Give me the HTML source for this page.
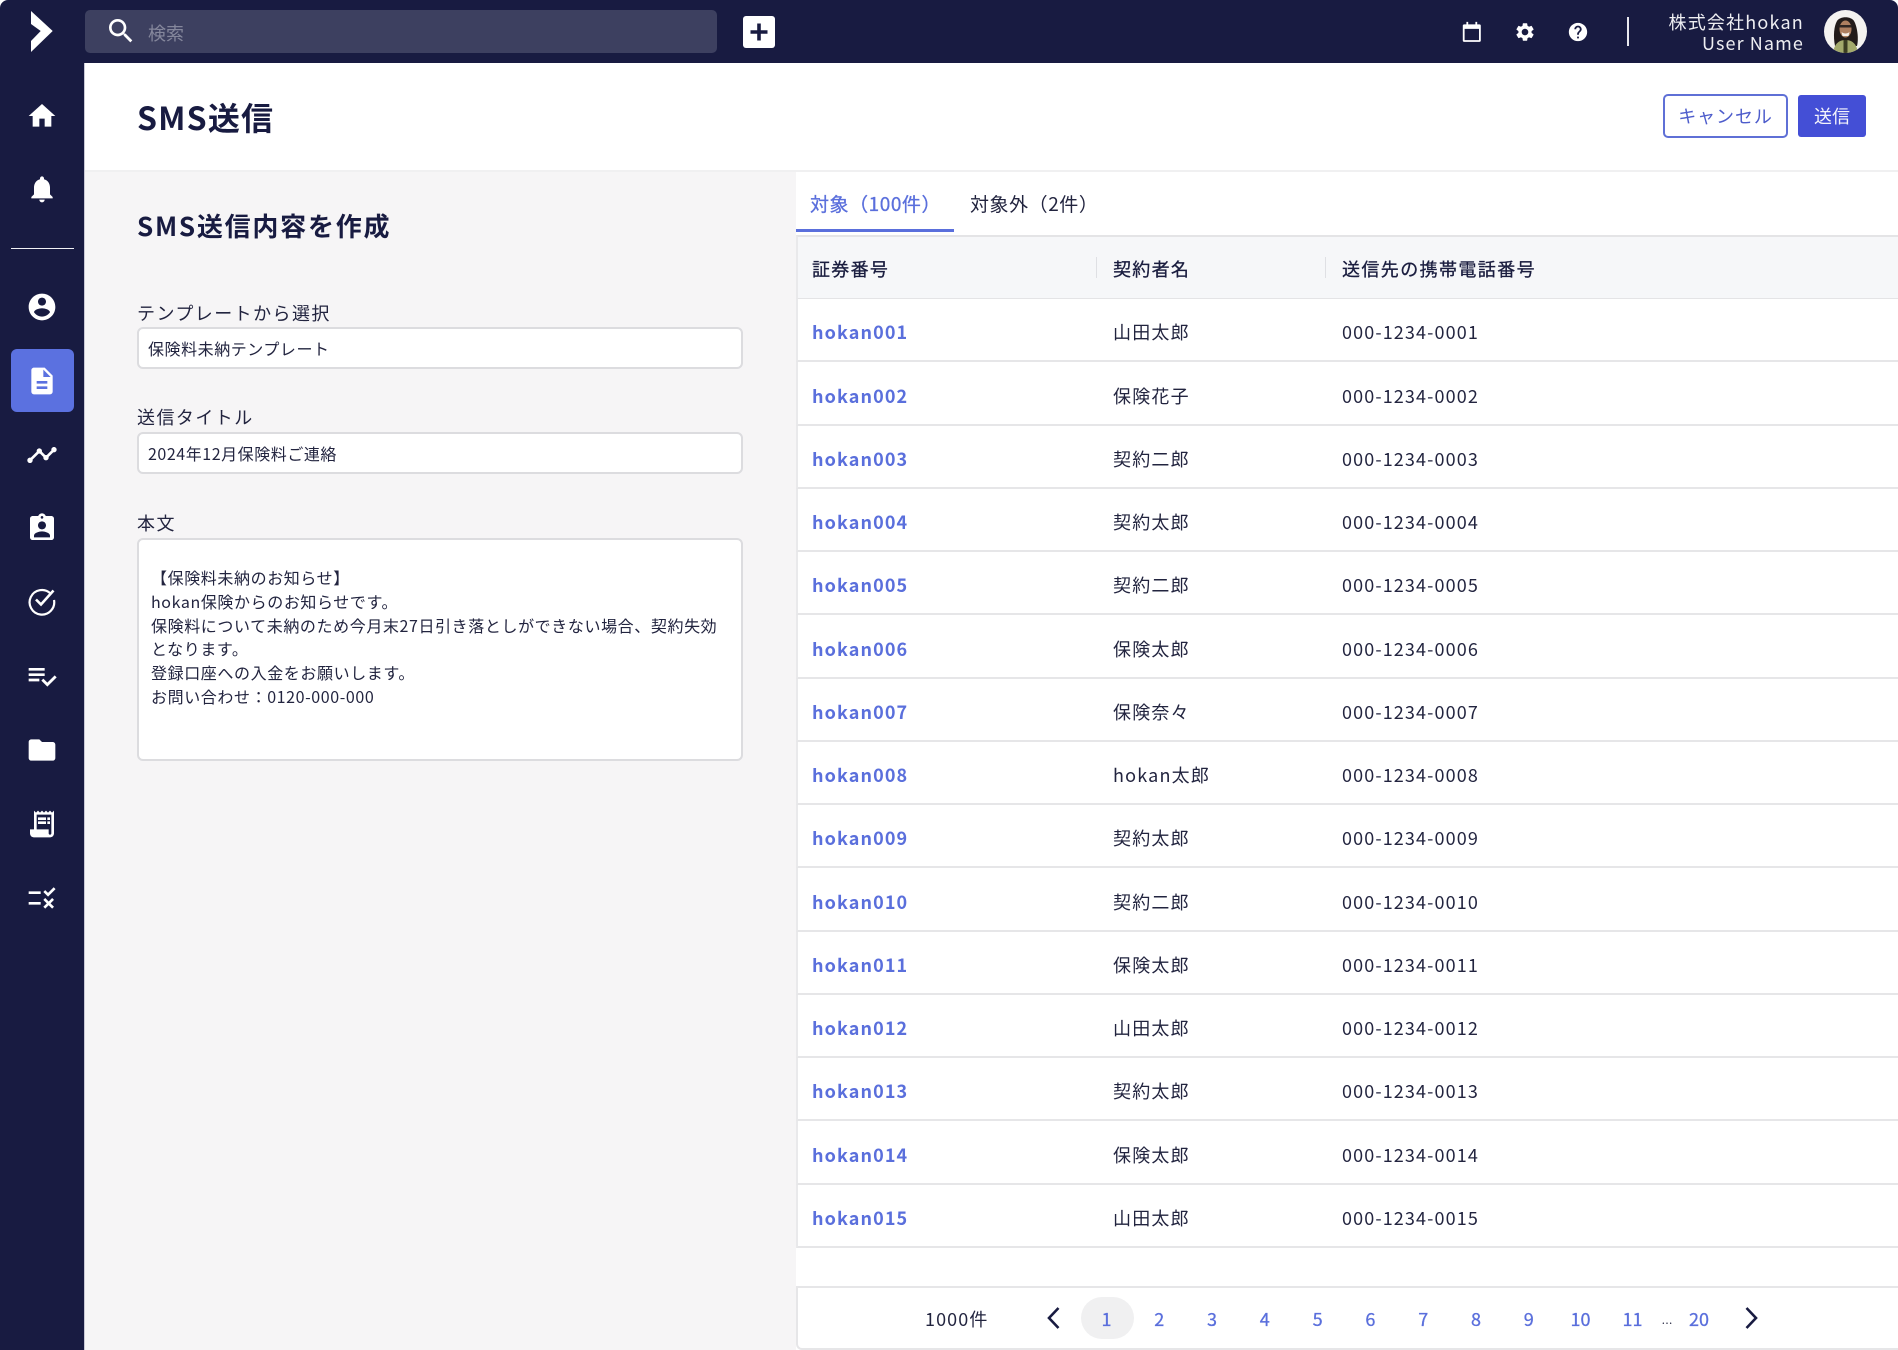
<!DOCTYPE html>
<html lang="ja"><head><meta charset="utf-8"><title>SMS送信</title>
<style>
*{box-sizing:border-box;margin:0;padding:0}
html,body{width:1898px;height:1350px;overflow:hidden;background:#fff}
body{font-family:"Noto Sans CJK JP","Liberation Sans",sans-serif;color:#1a1d3f;position:relative}
.a{position:absolute}
.t{position:absolute;white-space:nowrap;line-height:24px;height:24px}
.m{-webkit-text-stroke:.3px currentColor}
svg{position:absolute;fill:#fff}
.row{position:absolute;left:796px;width:1102px;height:63.25px;border-bottom:2px solid #e6e6e8;border-left:2px solid #e9e9eb;background:#fff}
.row span{position:absolute;top:21.3px;line-height:24px;font-size:18px;letter-spacing:1.1px;white-space:nowrap;color:#22243f}
.row .c1{left:14px;font-weight:700;color:#5a6fdc;letter-spacing:1.1px}
.row .c2{left:315px;letter-spacing:1.2px}
.row .c3{left:544px;letter-spacing:1.12px}
.lb{font-size:18px;letter-spacing:1.44px;color:#22243f;left:137px}
.inp{position:absolute;left:137px;width:606px;background:#fff;border:2px solid #dcdcdf;border-radius:6px}
.in{font-size:16px;letter-spacing:.55px;left:148px;color:#22243f}
.pg{position:absolute;top:1307px;line-height:24px;font-size:18px;color:#5a6fdc;width:40px;text-align:center;-webkit-text-stroke:.3px currentColor}
</style></head><body>
<div class="a" style="left:0;top:0;width:1898px;height:63px;background:#181b41;border-radius:8px 8px 0 0"></div>
<div class="a" style="left:0;top:40px;width:84px;height:1310px;background:#181b41"></div>
<div class="a" style="left:84px;top:63px;width:1px;height:1287px;background:#c9c9d6"></div>
<div class="a" style="left:85px;top:63px;width:1813px;height:109px;background:#fff;border-bottom:2px solid #f0f0f1"></div>
<div class="a" style="left:85px;top:172px;width:711px;height:1178px;background:#f6f5f6"></div>
<div class="a" style="left:796px;top:172px;width:1102px;height:1178px;background:#fff"></div>

<svg style="left:30px;top:11px" width="24" height="42" viewBox="0 0 24 42"><path d="M1 0L22.700 20 1 41V30L10.700 20 1 13z"/></svg>
<div class="a" style="left:85px;top:10px;width:632px;height:43px;background:#3d4060;border-radius:5px"></div>
<svg style="left:105px;top:15px" width="32" height="32" viewBox="0 0 24 24"><path d="M15.500 14h-.79l-.28-.27C15.410 12.590 16 11.110 16 9.500 16 5.910 13.090 3 9.500 3S3 5.910 3 9.500 5.910 16 9.500 16c1.610 0 3.090-.59 4.230-1.570l.27.28v.79l5 4.990L20.490 19l-4.990-5zm-6 0C7.010 14 5 11.990 5 9.500S7.010 5 9.500 5 14 7.010 14 9.500 11.990 14 9.500 14z"/></svg>
<div class="t" style="left:148px;top:20.500px;font-size:18px;color:#85879c">検索</div>
<div class="a" style="left:743px;top:16px;width:32px;height:32px;background:#fff;border-radius:3px"></div>
<svg style="left:743px;top:16px;fill:#181b41" width="32" height="32" viewBox="0 0 32 32"><path d="M14.200 7.500h3.600v6.700h6.700v3.600h-6.700v6.700h-3.600v-6.700H7.500v-3.600h6.700z"/></svg>

<svg style="left:1461.200px;top:21.200px" width="21.600" height="21.700" viewBox="0 0 24 26" preserveAspectRatio="none"><path d="M6 1h2v3h8V1h2v3h2.500c1 0 1.500.7 1.500 1.500V23.500c0 .8-.6 1.500-1.500 1.500h-17C2.600 25 2 24.300 2 23.500V5.500C2 4.700 2.500 4 3.500 4H6zM4 9.500V23h16V9.500z"/></svg>
<svg style="left:1514px;top:21px" width="22" height="22" viewBox="0 0 24 24"><path d="M19.140 12.940c.04-.3.06-.61.06-.94 0-.32-.02-.64-.07-.94l2.030-1.580c.18-.14.23-.41.12-.61l-1.920-3.320c-.12-.22-.37-.29-.59-.22l-2.390.96c-.5-.38-1.030-.7-1.620-.94l-.36-2.540c-.04-.24-.24-.41-.48-.41h-3.840c-.24 0-.43.17-.47.41l-.36 2.540c-.59.24-1.130.57-1.620.94l-2.390-.96c-.22-.08-.47 0-.59.22L2.740 8.870c-.12.21-.08.47.12.61l2.030 1.580c-.05.3-.09.63-.09.94s.02.64.07.94l-2.030 1.580c-.18.14-.23.41-.12.61l1.920 3.320c.12.22.37.29.59.22l2.390-.96c.5.38 1.030.7 1.620.94l.36 2.540c.05.24.24.41.48.41h3.840c.24 0 .44-.17.47-.41l.36-2.540c.59-.24 1.130-.56 1.620-.94l2.390.96c.22.08.47 0 .59-.22l1.920-3.320c.12-.22.07-.47-.12-.61l-2.010-1.580zM12 15.600c-1.980 0-3.600-1.620-3.600-3.600s1.620-3.600 3.600-3.600 3.600 1.620 3.600 3.600-1.620 3.600-3.600 3.600z"/></svg>
<svg style="left:1566.500px;top:21px" width="22" height="22" viewBox="0 0 24 24"><path d="M12 2C6.480 2 2 6.480 2 12s4.480 10 10 10 10-4.480 10-10S17.520 2 12 2zm1 17h-2v-2h2v2zm2.070-7.750l-.9.92C13.450 12.900 13 13.500 13 15h-2v-.5c0-1.100.45-2.100 1.170-2.830l1.240-1.260c.37-.36.59-.86.59-1.410 0-1.100-.9-2-2-2s-2 .9-2 2H8c0-2.210 1.790-4 4-4s4 1.790 4 4c0 .88-.36 1.680-.93 2.250z"/></svg>
<div class="a" style="left:1627px;top:17px;width:2px;height:29px;background:#e8e8ee"></div>
<div class="t" style="right:94px;top:10px;font-size:18px;letter-spacing:1.200px;color:#eeeef2">株式会社hokan</div>
<div class="t" style="right:94px;top:31px;font-size:18px;letter-spacing:1.100px;color:#eeeef2">User Name</div>
<svg style="left:1824px;top:10px;fill:none" width="43" height="43" viewBox="0 0 43 43"><defs><clipPath id="c"><circle cx="21.500" cy="21.500" r="21.500"/></clipPath></defs><g clip-path="url(#c)"><rect width="43" height="43" fill="#f4f3f0"/><path d="M11 36C9 26 10 16 13 11 16 6 27 6 30 11 33 16 35 28 33 36z" fill="#221c1a"/><path d="M9 43c1-8 5-13 12.500-13S33 35 34 43z" fill="#a3aa6c"/><ellipse cx="21.500" cy="19" rx="6" ry="8.500" fill="#ad7f60"/><path d="M17.500 22c2 2 6 2 8 0l-1 4h-6z" fill="#f5f0ea"/><path d="M15.500 15h12v2.500h-12z" fill="#2f2622"/><path d="M19.500 30h4v13h-4z" fill="#3b3d22"/></g></svg>

<!-- sidebar icons -->
<svg style="left:26px;top:100px" width="32" height="32" viewBox="0 0 24 24"><path d="M10 20v-6h4v6h5v-8h3L12 3 2 12h3v8z"/></svg>
<svg style="left:26px;top:173px" width="32" height="32" viewBox="0 0 24 24"><path d="M12 22c1.100 0 2-.9 2-2h-4c0 1.100.89 2 2 2zm6-6v-5c0-3.070-1.640-5.640-4.500-6.320V4c0-.83-.67-1.500-1.500-1.500s-1.500.67-1.500 1.500v.68C7.630 5.360 6 7.920 6 11v5l-2 2v1h16v-1l-2-2z"/></svg>
<div class="a" style="left:11px;top:248px;width:63px;height:1px;background:#f1f1f5"></div>
<svg style="left:26px;top:291px" width="32" height="32" viewBox="0 0 24 24"><path d="M12 2C6.480 2 2 6.480 2 12s4.480 10 10 10 10-4.480 10-10S17.520 2 12 2zm0 3c1.660 0 3 1.340 3 3s-1.340 3-3 3-3-1.340-3-3 1.340-3 3-3zm0 14.200c-2.500 0-4.710-1.280-6-3.220.03-1.990 4-3.080 6-3.080 1.990 0 5.970 1.090 6 3.080-1.290 1.940-3.500 3.220-6 3.220z"/></svg>
<div class="a" style="left:11px;top:349px;width:63px;height:63px;background:#5b71e0;border-radius:6px"></div>
<svg style="left:26px;top:365px" width="32" height="32" viewBox="0 0 24 24"><path d="M14 2H6c-1.100 0-1.990.9-1.990 2L4 20c0 1.100.89 2 1.990 2H18c1.100 0 2-.9 2-2V8l-6-6zm2 16H8v-2h8v2zm0-4H8v-2h8v2zm-3-5V3.500L18.500 9H13z"/></svg>
<svg style="left:26px;top:439px" width="32" height="32" viewBox="0 0 24 24"><path d="M23 8c0 1.100-.9 2-2 2-.18 0-.35-.02-.51-.07l-3.560 3.550c.05.16.07.34.07.52 0 1.100-.9 2-2 2s-2-.9-2-2c0-.18.02-.36.07-.52l-2.550-2.550c-.16.05-.34.07-.52.07s-.36-.02-.52-.07l-4.550 4.560c.05.16.07.33.07.51 0 1.100-.9 2-2 2s-2-.9-2-2 .9-2 2-2c.18 0 .35.02.51.07l4.560-4.550C8.020 9.360 8 9.180 8 9c0-1.100.9-2 2-2s2 .9 2 2c0 .18-.02.36-.07.52l2.550 2.550c.16-.05.34-.07.52-.07s.36.02.52.07l3.550-3.560C19.020 8.350 19 8.180 19 8c0-1.100.9-2 2-2s2 .9 2 2z"/></svg>
<svg style="left:26px;top:512px" width="32" height="32" viewBox="0 0 24 24"><path d="M19 3h-4.180C14.400 1.840 13.300 1 12 1c-1.300 0-2.400.84-2.820 2H5c-1.100 0-2 .9-2 2v14c0 1.100.9 2 2 2h14c1.100 0 2-.9 2-2V5c0-1.100-.9-2-2-2zm-7 0c.55 0 1 .45 1 1s-.45 1-1 1-1-.45-1-1 .45-1 1-1zm0 4c1.660 0 3 1.340 3 3s-1.340 3-3 3-3-1.340-3-3 1.340-3 3-3zm6 12H6v-1.400c0-2 4-3.100 6-3.100s6 1.100 6 3.100V19z"/></svg>
<svg style="left:26px;top:584px;fill:none;stroke:#fff" width="32" height="32" viewBox="0 0 32 32"><path d="M24.500 9.500A12.300 12.300 0 1 0 28 16" stroke-width="2.200"/><path d="M10 15.500l5 5L27.500 6.500" stroke-width="2.600"/></svg>
<svg style="left:26px;top:660px" width="32" height="32" viewBox="0 0 24 24"><path d="M14 10H2v2h12v-2zm0-4H2v2h12V6zM2 16h8v-2H2v2zm19.500-4.500L23 13l-6.990 7-4.510-4.500L13 14l3.010 3 5.490-5.500z"/></svg>
<svg style="left:26px;top:734px" width="32" height="32" viewBox="0 0 24 24"><path d="M10 4H4c-1.100 0-1.990.9-1.990 2L2 18c0 1.100.9 2 2 2h16c1.100 0 2-.9 2-2V8c0-1.100-.9-2-2-2h-8l-2-2z"/></svg>
<svg style="left:26px;top:808px" width="32" height="32" viewBox="0 0 24 24"><path d="M19.500 3.500L18 2l-1.500 1.500L15 2l-1.500 1.500L12 2l-1.500 1.500L9 2 7.500 3.500 6 2v14H3v3c0 1.660 1.340 3 3 3h12c1.660 0 3-1.340 3-3V2l-1.500 1.500zM19 19c0 .55-.45 1-1 1s-1-.45-1-1v-3H8V5h11v14z"/><path d="M9 7h6v2H9zM16 7h2v2h-2zM9 10h6v2H9zM16 10h2v2h-2z"/></svg>
<svg style="left:26px;top:882px" width="32" height="32" viewBox="0 0 24 24"><path d="M16.540 11L13 7.460l1.410-1.410 2.120 2.120 4.240-4.240 1.410 1.410L16.540 11zM11 7H2v2h9V7zm10 6.410L19.590 12 17 14.590 14.410 12 13 13.410 15.590 16 13 18.590 14.410 20 17 17.410 19.590 20 21 18.590 18.410 16 21 13.410zM11 15H2v2h9v-2z"/></svg>

<!-- header -->
<div class="t" style="left:137px;top:96.500px;height:40px;line-height:40px;font-size:32px;font-weight:700;letter-spacing:1.200px;color:#181b41">SMS送信</div>
<div class="a" style="left:1663px;top:94px;width:125px;height:44px;border:2px solid #5f70d6;border-radius:5px;background:#fff;color:#4d5ccb;font-size:18px;line-height:40px;text-align:center;letter-spacing:.9px">キャンセル</div>
<div class="a" style="left:1798px;top:95px;width:68px;height:42px;background:#444fd6;border-radius:3px;color:#f4f4fb;font-size:18px;line-height:42px;text-align:center">送信</div>

<!-- form -->
<div class="t" style="left:137px;top:210px;height:32px;line-height:32px;font-size:26px;font-weight:700;letter-spacing:1.760px;color:#181b41">SMS送信内容を作成</div>
<div class="t lb" style="top:301px">テンプレートから選択</div>
<div class="inp" style="top:327px;height:42px"></div>
<div class="t in" style="top:336px">保険料未納テンプレート</div>
<div class="t lb" style="top:405px">送信タイトル</div>
<div class="inp" style="top:432px;height:42px"></div>
<div class="t in" style="top:441px">2024年12月保険料ご連絡</div>
<div class="t lb" style="top:511px">本文</div>
<div class="inp" style="top:538px;height:223px"></div>
<div class="a" style="left:151px;top:566px;font-size:16px;line-height:23.800px;letter-spacing:.6px;white-space:nowrap;color:#22243f">【保険料未納のお知らせ】<br>hokan保険からのお知らせです。<br>保険料について未納のため今月末27日引き落としができない場合、契約失効<br>となります。<br>登録口座への入金をお願いします。<br>お問い合わせ：0120-000-000</div>

<!-- tabs -->
<div class="t m" style="left:810px;top:192px;font-size:19px;letter-spacing:.55px;color:#5a6fdc">対象（100件）</div>
<div class="t" style="left:970px;top:192px;font-size:19px;letter-spacing:.55px;color:#22243f">対象外（2件）</div>
<div class="a" style="left:796px;top:229px;width:158px;height:3px;background:#5a6fdc"></div>
<div class="a" style="left:796px;top:235px;width:1102px;height:65px;background:#f6f7f9;border-top:2px solid #e4e4e6;border-bottom:2px solid #e4e4e6;border-left:2px solid #e9e9eb"></div>
<div class="t m" style="left:812px;top:257px;font-size:18px;letter-spacing:1.300px">証券番号</div>
<div class="a" style="left:1096px;top:257px;width:1px;height:21px;background:#dfe0e4"></div>
<div class="t m" style="left:1113px;top:257px;font-size:18px;letter-spacing:1.300px">契約者名</div>
<div class="a" style="left:1325px;top:257px;width:1px;height:21px;background:#dfe0e4"></div>
<div class="t m" style="left:1342px;top:257px;font-size:18px;letter-spacing:1.400px">送信先の携帯電話番号</div>

<!-- rows -->
<div class="row" style="top:299px"><span class="c1">hokan001</span><span class="c2">山田太郎</span><span class="c3">000-1234-0001</span></div>
<div class="row" style="top:362.250px"><span class="c1">hokan002</span><span class="c2">保険花子</span><span class="c3">000-1234-0002</span></div>
<div class="row" style="top:425.500px"><span class="c1">hokan003</span><span class="c2">契約二郎</span><span class="c3">000-1234-0003</span></div>
<div class="row" style="top:488.750px"><span class="c1">hokan004</span><span class="c2">契約太郎</span><span class="c3">000-1234-0004</span></div>
<div class="row" style="top:552px"><span class="c1">hokan005</span><span class="c2">契約二郎</span><span class="c3">000-1234-0005</span></div>
<div class="row" style="top:615.250px"><span class="c1">hokan006</span><span class="c2">保険太郎</span><span class="c3">000-1234-0006</span></div>
<div class="row" style="top:678.500px"><span class="c1">hokan007</span><span class="c2">保険奈々</span><span class="c3">000-1234-0007</span></div>
<div class="row" style="top:741.750px"><span class="c1">hokan008</span><span class="c2">hokan太郎</span><span class="c3">000-1234-0008</span></div>
<div class="row" style="top:805px"><span class="c1">hokan009</span><span class="c2">契約太郎</span><span class="c3">000-1234-0009</span></div>
<div class="row" style="top:868.250px"><span class="c1">hokan010</span><span class="c2">契約二郎</span><span class="c3">000-1234-0010</span></div>
<div class="row" style="top:931.500px"><span class="c1">hokan011</span><span class="c2">保険太郎</span><span class="c3">000-1234-0011</span></div>
<div class="row" style="top:994.750px"><span class="c1">hokan012</span><span class="c2">山田太郎</span><span class="c3">000-1234-0012</span></div>
<div class="row" style="top:1058px"><span class="c1">hokan013</span><span class="c2">契約太郎</span><span class="c3">000-1234-0013</span></div>
<div class="row" style="top:1121.250px"><span class="c1">hokan014</span><span class="c2">保険太郎</span><span class="c3">000-1234-0014</span></div>
<div class="row" style="top:1184.500px"><span class="c1">hokan015</span><span class="c2">山田太郎</span><span class="c3">000-1234-0015</span></div>

<!-- pagination -->
<div class="a" style="left:796px;top:1286px;width:1102px;height:64px;background:#fff;border:2px solid #e6e6e8;border-right:0;border-radius:0 0 0 6px"></div>
<div class="t" style="left:925px;top:1307px;font-size:18px;letter-spacing:1.100px;color:#22243f">1000件</div>
<svg style="left:1043px;top:1305px;fill:none;stroke:#181b41" width="20" height="26" viewBox="0 0 20 26"><path d="M15.500 3L6 13l9.500 10" stroke-width="2.600"/></svg>
<svg style="left:1742px;top:1305px;fill:none;stroke:#181b41" width="20" height="26" viewBox="0 0 20 26"><path d="M4.500 3L14 13 4.500 23" stroke-width="2.600"/></svg>
<div class="a" style="left:1081px;top:1297px;width:53px;height:42px;background:#f0f0f1;border-radius:21px"></div>
<div class="pg" style="left:1086.500px">1</div>
<div class="pg" style="left:1139.300px">2</div>
<div class="pg" style="left:1192px">3</div>
<div class="pg" style="left:1244.800px">4</div>
<div class="pg" style="left:1297.600px">5</div>
<div class="pg" style="left:1350.400px">6</div>
<div class="pg" style="left:1403.200px">7</div>
<div class="pg" style="left:1456px">8</div>
<div class="pg" style="left:1508.800px">9</div>
<div class="pg" style="left:1560.500px">10</div>
<div class="pg" style="left:1612.500px">11</div>
<div class="pg" style="left:1647px;color:#22243f;font-size:11px;top:1311px;-webkit-text-stroke:0">…</div>
<div class="pg" style="left:1679px">20</div>
</body></html>
